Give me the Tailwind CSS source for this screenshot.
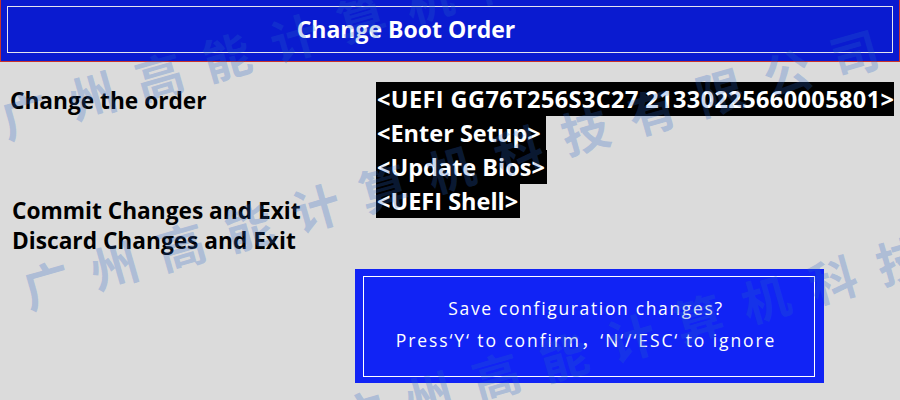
<!doctype html>
<html>
<head>
<meta charset="utf-8">
<script src="https://cdn.jsdelivr.net/npm/@tailwindcss/browser@4"></script>
</head>
<body class="m-0">
<div class="relative w-[900px] h-[400px] overflow-hidden bg-[#dbdbdb] font-['Open_Sans','Noto_Sans',sans-serif]">
  <header class="h-[62px] bg-[#0a1bd0] border-x border-b border-[#c8322d] pt-[6px] px-[6px]">
    <div class="h-[47px] border border-[#e4e4ee] flex items-center justify-center pr-[88px]">
      <h1 class="text-[23px] font-bold text-white leading-none">Change Boot Order</h1>
    </div>
  </header>
  <main class="relative flex">
    <div class="w-[376px] pl-[10px] pt-[24px] text-black text-[22.7px] font-bold leading-[30px] whitespace-nowrap">
      <p>Change the order</p>
      <div class="mt-[80px] pl-[2px]">
        <p>Commit Changes and Exit</p>
        <p>Discard Changes and Exit</p>
      </div>
    </div>
    <div class="pt-[20px] flex flex-col items-start text-white text-[23.5px] font-bold leading-[34px]">
      <span class="bg-black pl-[1px] pr-[0px] h-[34px] whitespace-nowrap tracking-[0.4px]">&lt;UEFI GG76T256S3C27 21330225660005801&gt;</span>
      <span class="bg-black pl-[1px] pr-[5px] h-[34px]">&lt;Enter Setup&gt;</span>
      <span class="bg-black pl-[1px] pr-[2px] h-[34px]">&lt;Update Bios&gt;</span>
      <span class="bg-black pl-[1px] pr-[2px] h-[34px]">&lt;UEFI Shell&gt;</span>
    </div>
  </main>
  <section class="absolute left-[355px] top-[269px] w-[469px] h-[114px] bg-[#1123f5] pt-[7px] pl-[8px]">
    <div class="w-[452px] h-[101px] border border-white flex flex-col items-center pt-[15px] pr-[6px] text-white text-[17.5px] font-['Open_Sans','Noto_Sans_CJK_SC',sans-serif] tracking-[1.65px] leading-[32px] whitespace-nowrap">
      <p>Save configuration changes?</p>
      <p class="tracking-[1.9px]">Press‘Y‘ to confirm，‘N‘/‘ESC‘ to ignore</p>
    </div>
  </section>
  <div class="absolute inset-0 pointer-events-none text-[rgba(40,100,200,0.26)] font-['Noto_Sans_CJK_SC',sans-serif] font-bold text-[48px] leading-[50px]">
    <div class="absolute left-[-27px] top-[-28px] w-[910px] h-[50px] flex rotate-[-16deg]">
      <span class="w-[70px] text-center">广</span><span class="w-[70px] text-center">州</span><span class="w-[70px] text-center">高</span><span class="w-[70px] text-center">能</span><span class="w-[70px] text-center">计</span><span class="w-[70px] text-center">算</span><span class="w-[70px] text-center">机</span><span class="w-[70px] text-center">科</span><span class="w-[70px] text-center">技</span><span class="w-[70px] text-center">有</span><span class="w-[70px] text-center">限</span><span class="w-[70px] text-center">公</span><span class="w-[70px] text-center">司</span>
    </div>
    <div class="absolute left-[-5px] top-[142px] w-[910px] h-[50px] flex rotate-[-16deg]">
      <span class="w-[70px] text-center">广</span><span class="w-[70px] text-center">州</span><span class="w-[70px] text-center">高</span><span class="w-[70px] text-center">能</span><span class="w-[70px] text-center">计</span><span class="w-[70px] text-center">算</span><span class="w-[70px] text-center">机</span><span class="w-[70px] text-center">科</span><span class="w-[70px] text-center">技</span><span class="w-[70px] text-center">有</span><span class="w-[70px] text-center">限</span><span class="w-[70px] text-center">公</span><span class="w-[70px] text-center">司</span>
    </div>
    <div class="absolute left-[310px] top-[272px] w-[910px] h-[50px] flex rotate-[-16deg]">
      <span class="w-[70px] text-center">广</span><span class="w-[70px] text-center">州</span><span class="w-[70px] text-center">高</span><span class="w-[70px] text-center">能</span><span class="w-[70px] text-center">计</span><span class="w-[70px] text-center">算</span><span class="w-[70px] text-center">机</span><span class="w-[70px] text-center">科</span><span class="w-[70px] text-center">技</span><span class="w-[70px] text-center">有</span><span class="w-[70px] text-center">限</span><span class="w-[70px] text-center">公</span><span class="w-[70px] text-center">司</span>
    </div>
  </div>
</div>
</body>
</html>
